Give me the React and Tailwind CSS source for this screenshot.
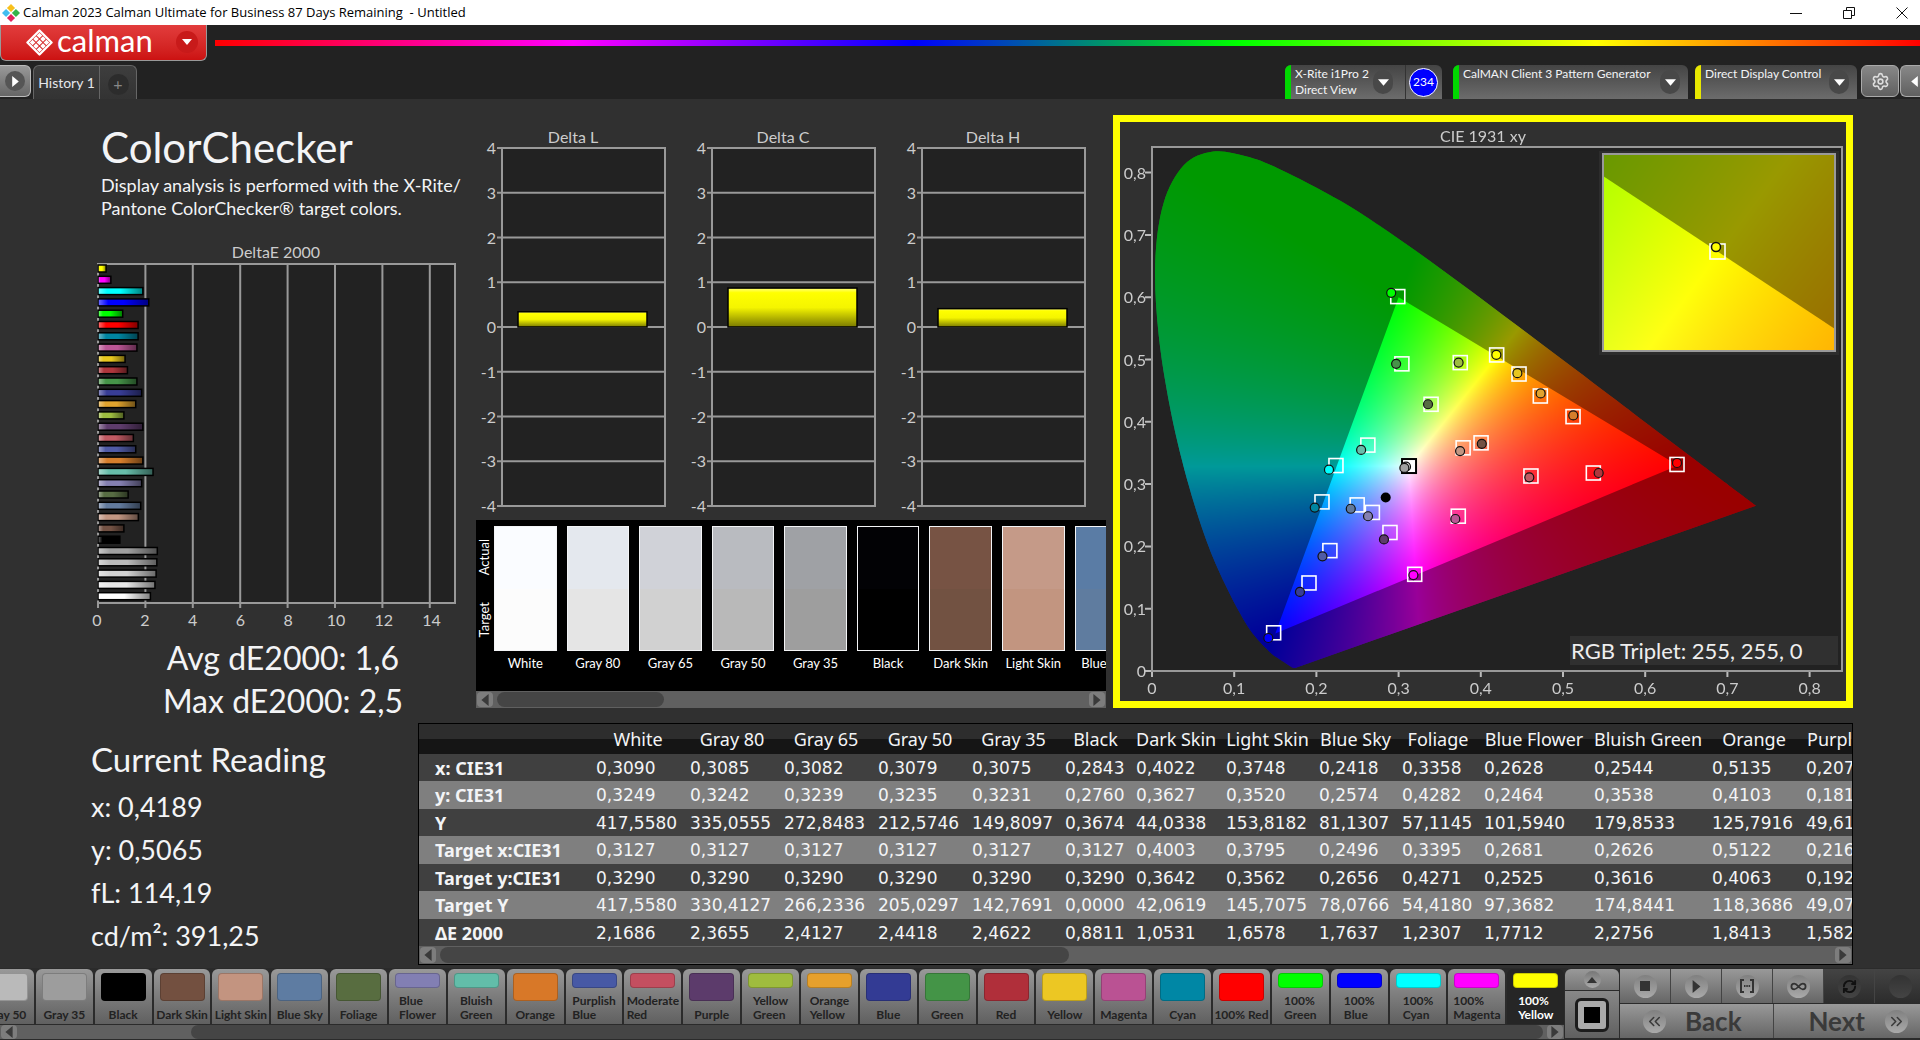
import React, { useLayoutEffect, useRef } from "react";
import { ChevronsLeft, ChevronsRight, Infinity as InfinityIcon, RefreshCw, Settings } from "lucide-react";
import clsx from "clsx";

const READINGS = [
  { name: "White", width: "w-[94px]", values: ["0,3090", "0,3249", "417,5580", "0,3127", "0,3290", "417,5580", "2,1686"] },
  { name: "Gray 80", width: "w-[94px]", values: ["0,3085", "0,3242", "335,0555", "0,3127", "0,3290", "330,4127", "2,3655"] },
  { name: "Gray 65", width: "w-[94px]", values: ["0,3082", "0,3239", "272,8483", "0,3127", "0,3290", "266,2336", "2,4127"] },
  { name: "Gray 50", width: "w-[94px]", values: ["0,3079", "0,3235", "212,5746", "0,3127", "0,3290", "205,0297", "2,4418"] },
  { name: "Gray 35", width: "w-[93px]", values: ["0,3075", "0,3231", "149,8097", "0,3127", "0,3290", "142,7691", "2,4622"] },
  { name: "Black", width: "w-[71px]", values: ["0,2843", "0,2760", "0,3674", "0,3127", "0,3290", "0,0000", "0,8811"] },
  { name: "Dark Skin", width: "w-[90px]", values: ["0,4022", "0,3627", "44,0338", "0,4003", "0,3642", "42,0619", "1,0531"] },
  { name: "Light Skin", width: "w-[93px]", values: ["0,3748", "0,3520", "153,8182", "0,3795", "0,3562", "145,7075", "1,6578"] },
  { name: "Blue Sky", width: "w-[83px]", values: ["0,2418", "0,2574", "81,1307", "0,2496", "0,2656", "78,0766", "1,7637"] },
  { name: "Foliage", width: "w-[82px]", values: ["0,3358", "0,4282", "57,1145", "0,3395", "0,4271", "54,4180", "1,2307"] },
  { name: "Blue Flower", width: "w-[110px]", values: ["0,2628", "0,2464", "101,5940", "0,2681", "0,2525", "97,3682", "1,7712"] },
  { name: "Bluish Green", width: "w-[118px]", values: ["0,2544", "0,3538", "179,8533", "0,2626", "0,3616", "174,8441", "2,2756"] },
  { name: "Orange", width: "w-[94px]", values: ["0,5135", "0,4103", "125,7916", "0,5122", "0,4063", "118,3686", "1,8413"] },
  { name: "Purplish Blue", width: "w-[124px]", values: ["0,2074", "0,1811", "49,6132", "0,2164", "0,1922", "49,0742", "1,5824"] },
];

const ROW_LABELS = ["x: CIE31", "y: CIE31", "Y", "Target x:CIE31", "Target y:CIE31", "Target Y", "ΔE 2000"];

const DELTA_E = [
  ["#ffff00", 0.3], ["#ff00ff", 0.5], ["#00ffff", 1.85], ["#0000ff", 2.1], ["#00ff00", 1.0],
  ["#ff0000", 1.65], ["#0085a1", 1.65], ["#bb5695", 1.6], ["#e7c71f", 1.1], ["#af363c", 1.2],
  ["#469449", 1.6], ["#383d96", 1.8], ["#e0a32e", 1.55], ["#9dbc40", 1.05], ["#5e3c6c", 1.85],
  ["#c15a63", 1.45], ["#505ba6", 1.55], ["#d67e2c", 1.85], ["#67bdaa", 2.28], ["#8580b1", 1.8],
  ["#576c43", 1.23], ["#627a9d", 1.76], ["#c29682", 1.66], ["#735244", 1.05], ["#000000", 0.88],
  ["#a0a0a0", 2.46], ["#bababa", 2.44], ["#d2d2d2", 2.41], ["#e6e6e6", 2.36], ["#ffffff", 2.17],
];

const SWATCHES = [
  { name: "White", actual: "bg-[#fafcff]", target: "bg-[#fcfcfc]" },
  { name: "Gray 80", actual: "bg-[#e4e8ee]", target: "bg-[#e5e5e5]" },
  { name: "Gray 65", actual: "bg-[#d0d2d8]", target: "bg-[#d1d1d1]" },
  { name: "Gray 50", actual: "bg-[#b9bbc0]", target: "bg-[#b9b9b9]" },
  { name: "Gray 35", actual: "bg-[#9fa1a5]", target: "bg-[#9e9e9e]" },
  { name: "Black", actual: "bg-[#020205]", target: "bg-black" },
  { name: "Dark Skin", actual: "bg-[#775344]", target: "bg-[#725242]" },
  { name: "Light Skin", actual: "bg-[#c59a88]", target: "bg-[#c29580]" },
  { name: "Blue Sky", actual: "bg-[#5a7ca5]", target: "bg-[#5f7c9f]" },
];

const PATCHES = [
  ["Gray 50", "bg-[#bababa]"],
  ["Gray 35", "bg-[#9d9d9d]"],
  ["Black", "bg-black"],
  ["Dark Skin", "bg-[#735040]"],
  ["Light Skin", "bg-[#c39480]"],
  ["Blue Sky", "bg-[#5e7ca2]"],
  ["Foliage", "bg-[#586d40]"],
  ["Blue Flower", "bg-[#827fb3]"],
  ["Bluish Green", "bg-[#62bda9]"],
  ["Orange", "bg-[#d87828]"],
  ["Purplish Blue", "bg-[#4759a5]"],
  ["Moderate Red", "bg-[#c44f60]"],
  ["Purple", "bg-[#5c3b6b]"],
  ["Yellow Green", "bg-[#9fbc3e]"],
  ["Orange Yellow", "bg-[#e6a02c]"],
  ["Blue", "bg-[#333b94]"],
  ["Green", "bg-[#449447]"],
  ["Red", "bg-[#b02f3a]"],
  ["Yellow", "bg-[#ecc723]"],
  ["Magenta", "bg-[#ba5293]"],
  ["Cyan", "bg-[#0087a5]"],
  ["100% Red", "bg-[#ff0000]"],
  ["100% Green", "bg-[#00ff00]"],
  ["100% Blue", "bg-[#0000ff]"],
  ["100% Cyan", "bg-[#00ffff]"],
  ["100% Magenta", "bg-[#ff00ff]"],
  ["100% Yellow", "bg-[#ffff00]"],
];

const ONE_LINE = ["Gray 35", "Gray 50", "Dark Skin", "Light Skin", "Blue Sky", "100% Red"];

// spectral locus, 380nm to 700nm
const LOCUS = [
  [0.1741, 0.005], [0.1714, 0.0051], [0.1644, 0.0109], [0.1566, 0.0177], [0.144, 0.0297],
  [0.1241, 0.0578], [0.1096, 0.0868], [0.0913, 0.1327], [0.0687, 0.2007], [0.0454, 0.295],
  [0.0235, 0.4127], [0.0082, 0.5384], [0.0039, 0.6548], [0.0139, 0.7502], [0.0389, 0.812],
  [0.0743, 0.8338], [0.1142, 0.8262], [0.1547, 0.8059], [0.2296, 0.7543], [0.3016, 0.6923],
  [0.3731, 0.6245], [0.4441, 0.5547], [0.5125, 0.4866], [0.5752, 0.4242], [0.627, 0.3725],
  [0.6658, 0.334], [0.6915, 0.3083], [0.719, 0.2809], [0.7347, 0.2653],
];

// target x, target y, measured x, measured y, color
const POINTS = [
  [0.299, 0.601, 0.291, 0.607, "#00ff00"],
  [0.304, 0.493, 0.297, 0.493, "#469449"],
  [0.375, 0.495, 0.373, 0.495, "#9dbc40"],
  [0.4193, 0.5073, 0.4189, 0.5075, "#ffff00"],
  [0.4465, 0.4767, 0.4445, 0.478, "#e7c71f"],
  [0.4724, 0.4414, 0.4728, 0.4456, "#e0a32e"],
  [0.5122, 0.4083, 0.5125, 0.4103, "#d67e2c"],
  [0.3395, 0.4281, 0.3358, 0.4282, "#576c43"],
  [0.2626, 0.3626, 0.2544, 0.3548, "#67bdaa"],
  [0.2238, 0.3298, 0.2153, 0.3231, "#00ffff"],
  [0.2068, 0.2714, 0.198, 0.2623, "#0085a1"],
  [0.2496, 0.2666, 0.2418, 0.2604, "#627a9d"],
  [0.2681, 0.2545, 0.2628, 0.2484, "#8580b1"],
  [0.2895, 0.2223, 0.2822, 0.2112, "#5e3c6c"],
  [0.2164, 0.1932, 0.2074, 0.1841, "#505ba6"],
  [0.191, 0.1413, 0.18, 0.127, "#383d96"],
  [0.148, 0.0613, 0.1415, 0.053, "#0000ff"],
  [0.3196, 0.1552, 0.318, 0.154, "#ff00ff"],
  [0.3726, 0.2485, 0.369, 0.244, "#bb5695"],
  [0.3785, 0.3582, 0.3748, 0.353, "#c29682"],
  [0.4003, 0.3662, 0.4012, 0.3647, "#735244"],
  [0.461, 0.313, 0.459, 0.3108, "#c15a63"],
  [0.5369, 0.3178, 0.5434, 0.3178, "#af363c"],
  [0.6387, 0.3315, 0.6387, 0.3339, "#ff0000"],
];

const METER_READINGS = ["x: 0,4189", "y: 0,5065", "fL: 114,19", "cd/m²: 391,25"];

function xyToRgb(x, y) {
  const X = x / y;
  const Z = (1 - x - y) / y;
  const r = Math.max(0, 3.2406 * X - 1.5372 - 0.4986 * Z);
  const g = Math.max(0, -0.9689 * X + 1.8758 + 0.0415 * Z);
  const b = Math.max(0, 0.0557 * X - 0.204 + 1.057 * Z);
  const max = Math.max(r, g, b) || 1;
  return [r, g, b].map((v) => (255 * v) / max);
}

// Fills a canvas with the fully lit chromaticity colors of the given xy window
const ChromaField = ({ width, height, x0, x1, y0, y1 }) => {
  const ref = useRef(null);

  useLayoutEffect(() => {
    const ctx = ref.current.getContext("2d");
    const image = ctx.createImageData(width, height);
    for (let j = 0; j < height; j++) {
      const y = y1 - ((j + 0.5) / height) * (y1 - y0);
      for (let i = 0; i < width; i++) {
        const x = x0 + ((i + 0.5) / width) * (x1 - x0);
        const [r, g, b] = xyToRgb(x, y);
        image.data.set([r, g, b, 255], (j * width + i) * 4);
      }
    }
    ctx.putImageData(image, 0, 0);
  }, [width, height, x0, x1, y0, y1]);

  return <canvas ref={ref} width={width} height={height} className="block" />;
};

const px = (x) => 32 + x * 822;
const py = (y) => 549 - y * 623;

function smoothPath(points) {
  const p = points.map(([x, y]) => [px(x), py(y)]);
  let d = `M${p[0]}`;
  for (let i = 0; i < p.length - 1; i++) {
    const a = p[i - 1] || p[i];
    const b = p[i];
    const c = p[i + 1];
    const e = p[i + 2] || c;
    d += `C${b[0] + (c[0] - a[0]) / 6},${b[1] + (c[1] - a[1]) / 6} ${c[0] - (e[0] - b[0]) / 6},${c[1] - (e[1] - b[1]) / 6} ${c}`;
  }
  return d + "Z";
}

const LOCUS_PATH = smoothPath(LOCUS);
const TRIANGLE = `M${px(0.64)},${py(0.33)}L${px(0.3)},${py(0.6)}L${px(0.15)},${py(0.06)}Z`;

const CieChart = () => (
  <svg viewBox="0 0 726 579" className="block w-full h-auto bg-[#303030] font-['Lato',sans-serif]">
    <rect x="32" y="25" width="690" height="524" fill="#222" />
    <foreignObject x="32" y="25" width="640" height="524">
      <ChromaField width={640} height={524} x0={0} x1={640 / 822} y0={0} y1={524 / 623} />
    </foreignObject>
    <path d={`M31,24H673V550H31Z${LOCUS_PATH}`} fill="#222" fillRule="evenodd" />
    <path d={LOCUS_PATH + TRIANGLE} fill="#000" fillOpacity="0.4" fillRule="evenodd" />
    <rect x="32" y="25" width="690" height="524" fill="none" stroke="#999" strokeWidth="2" />
    <g fill="#ccc" fontSize="16">
      <text x="363" y="20" textAnchor="middle">CIE 1931 xy</text>
      {[0, 1, 2, 3, 4, 5, 6, 7, 8].map((n) => (
        <g key={n}>
          <path d={`M${px(n / 10)},550v5M31,${py(n / 10)}h-6`} stroke="#bbb" strokeWidth="2" />
          <text x={px(n / 10)} y="572" textAnchor="middle">{n ? `0,${n}` : "0"}</text>
          <text x="26" y={py(n / 10) + 6} textAnchor="end">{n ? `0,${n}` : "0"}</text>
        </g>
      ))}
    </g>
    {POINTS.map(([tx, ty, mx, my, color]) => (
      <g key={color + tx}>
        <rect x={px(tx) - 7} y={py(ty) - 7} width="14" height="14" fill="none" stroke="#fff" strokeWidth="1.6" />
        <circle cx={px(mx)} cy={py(my)} r="4.5" fill={color} stroke="#111" strokeWidth="1.2" />
      </g>
    ))}
    <rect x={px(0.3127) - 7} y={py(0.329) - 7} width="14" height="14" fill="#fff" stroke="#000" strokeWidth="2" />
    <circle cx={px(0.309)} cy={py(0.328)} r="4.5" fill="#ddd" stroke="#111" strokeWidth="1.2" />
    <circle cx={px(0.307)} cy={py(0.326)} r="4.5" fill="#a0a0a0" stroke="#111" strokeWidth="1.2" />
    <circle cx={px(0.2843)} cy={py(0.2786)} r="5" fill="#000" />

    {/* magnified area around the current reading */}
    <rect x="479" y="29" width="240" height="204" fill="#2c2c2c" />
    <foreignObject x="483" y="32" width="232" height="197">
      <ChromaField width={232} height={197} x0={0.394} x1={0.4444} y0={0.4792} y1={0.531} />
    </foreignObject>
    <path d="M483,54L715,207V32H483Z" fill="#000" fillOpacity="0.4" />
    <rect x="483" y="32" width="232" height="197" fill="none" stroke="#999" strokeWidth="2" />
    <rect x="590" y="122" width="15" height="15" fill="none" stroke="#fff" strokeWidth="1.6" />
    <circle cx="596" cy="125" r="4.5" fill="#ffff00" stroke="#111" strokeWidth="1.5" />

    <rect x="450" y="514" width="268" height="29" fill="#303030" />
    <text x="451" y="537" fill="#eee" fontSize="22">RGB Triplet: 255, 255, 0</text>
  </svg>
);

const DeltaEChart = () => (
  <svg viewBox="0 0 386 394" className="block w-[386px] h-auto font-['Lato',sans-serif]">
    <defs>
      <linearGradient id="shade" x1="0" x2="1" y1="0" y2="0">
        <stop offset="0" stopColor="#fff" stopOpacity="0.45" />
        <stop offset="0.2" stopColor="#fff" stopOpacity="0" />
        <stop offset="0.5" stopColor="#000" stopOpacity="0" />
        <stop offset="1" stopColor="#000" stopOpacity="0.5" />
      </linearGradient>
    </defs>
    <text x="193" y="18" textAnchor="middle" fill="#ccc" fontSize="16">DeltaE 2000</text>
    <rect x="15" y="24" width="357" height="339" fill="#222" stroke="#999" strokeWidth="2" />
    {[0, 2, 4, 6, 8, 10, 12, 14].map((n) => (
      <g key={n}>
        <path d={`M${15 + n * 23.7},24v344`} stroke="#999" strokeWidth="2" />
        <text x={14 + n * 23.9} y="386" textAnchor="middle" fill="#ccc" fontSize="16">{n}</text>
      </g>
    ))}
    {DELTA_E.map(([color, value], i) => (
      <g key={i}>
        <rect x="15" y={25 + i * 11.3} width={value * 23.7 + 1} height="7" fill={color} />
        <rect x="15" y={25 + i * 11.3} width={value * 23.7 + 1} height="7" fill="url(#shade)" stroke="#000" strokeWidth="1.5" />
      </g>
    ))}
  </svg>
);

const DeltaChart = ({ title, value }) => (
  <svg viewBox="0 -8 210 396" className="block flex-1 min-w-0 h-auto font-['Lato',sans-serif]">
    <defs>
      <linearGradient id="yellow" x1="0" x2="0" y1="0" y2="1">
        <stop offset="0" stopColor="#ffff80" />
        <stop offset="0.12" stopColor="#ffff00" />
        <stop offset="0.5" stopColor="#f5f500" />
        <stop offset="1" stopColor="#7a7a00" />
      </linearGradient>
    </defs>
    <text x="103" y="15" textAnchor="middle" fill="#ccc" fontSize="16">{title}</text>
    <rect x="32" y="20" width="163" height="358" fill="#222" stroke="#999" strokeWidth="2" />
    {[4, 3, 2, 1, 0, -1, -2, -3, -4].map((n) => (
      <g key={n}>
        <path d={`M27,${199 - n * 44.75}H195`} stroke="#999" strokeWidth="1.8" />
        <text x="26" y={205 - n * 44.75} textAnchor="end" fill="#ccc" fontSize="16">{n}</text>
      </g>
    ))}
    <rect x="48" y={199 - value * 44.75} width="129" height={value * 44.75} fill="url(#yellow)" stroke="#000" strokeWidth="1.5" />
  </svg>
);

const Arrow = ({ dir = "down", className }) => (
  <svg viewBox="0 0 10 10" className={clsx("block shrink-0", className)} fill="currentColor" aria-hidden="true">
    {dir === "down" && <path d="M0,2h10L5,8z" />}
    {dir === "up" && <path d="M0,8h10L5,2z" />}
    {dir === "left" && <path d="M8,0v10L2,5z" />}
    {dir === "right" && <path d="M2,0v10L8,5z" />}
  </svg>
);

const ScrollBar = ({ children, className }) => (
  <div className={clsx("flex items-center gap-1 px-px bg-[#606060]", className)}>
    <button aria-label="Scroll left" className="w-4 h-full flex items-center justify-center rounded bg-[#7d7d7d] text-[#3a3a3a]">
      <Arrow dir="left" className="w-3 h-3" />
    </button>
    <div className="flex-1 h-full flex">{children}</div>
    <button aria-label="Scroll right" className="w-4 h-full flex items-center justify-center rounded bg-[#7d7d7d] text-[#3a3a3a]">
      <Arrow dir="right" className="w-3 h-3" />
    </button>
  </div>
);

const TitleBar = () => (
  <div className="h-[25px] bg-white text-black flex items-center pl-0.5">
    <svg viewBox="0 0 20 20" className="w-[18px] h-[18px] mr-[3px]" aria-hidden="true">
      <path d="M10,0l4.5,4.5L10,9L5.500,4.5z" fill="#f8c01c" />
      <path d="M15.500,5.500l4.500,4.500l-4.500,4.500l-4.500,-4.500z" fill="#35b44a" />
      <path d="M4.500,5.500l4.500,4.500l-4.500,4.500l-4.500,-4.500z" fill="#42bdf0" />
      <path d="M10,11l4.500,4.500L10,20l-4.500,-4.500z" fill="#e3235c" />
    </svg>
    <span className="flex-1 pt-px text-[13px] font-['Open_Sans',sans-serif] whitespace-pre">
      Calman 2023 Calman Ultimate for Business 87 Days Remaining  - Untitled
    </span>
    <div className="h-full flex gap-[17px]">
      <button aria-label="Minimize" className="w-9 flex items-center justify-center">
        <svg viewBox="0 0 12 12" className="w-3 h-3" stroke="#111" fill="none"><path d="M0,6.5h12" /></svg>
      </button>
      <button aria-label="Restore" className="w-9 flex items-center justify-center">
        <svg viewBox="0 0 12 12" className="w-3 h-3" stroke="#111" fill="none"><path d="M.5,3.500h8v8h-8zM3.500,3.500v-3h8v8h-3" /></svg>
      </button>
      <button aria-label="Close" className="w-9 flex items-center justify-center">
        <svg viewBox="0 0 12 12" className="w-3 h-3" stroke="#111" fill="none"><path d="M.5,.5l11,11M11.500,.5l-11,11" /></svg>
      </button>
    </div>
  </div>
);

const Logo = () => (
  <svg viewBox="0 0 28 28" className="w-[27px] h-[27px]" aria-hidden="true">
    <path d="M14,1.500L26.500,14L14,26.500L1.500,14z" fill="none" stroke="#fff" strokeWidth="2.400" strokeLinejoin="round" />
    <g fill="#fff">
      {[-1, 0, 1].map((a) =>
        [-1, 0, 1].map((b) => (
          <path key={`${a}${b}`} transform={`translate(${14 + (a - b) * 3.6} ${14 + (a + b) * 3.6})`} d="M0,-2.900L2.900,0L0,2.900L-2.900,0z" />
        ))
      )}
    </g>
  </svg>
);

const DeviceButton = ({ lines, stripe, className, badge }) => (
  <div className={clsx("flex h-[34px] rounded-t-md overflow-hidden bg-gradient-to-b from-[#444] to-[#6c6c6c]", className)}>
    <div className={clsx("w-[6px] shrink-0", stripe)} />
    <button className={clsx("flex-1 flex items-center justify-between pl-1 text-left", badge ? "pr-3" : "pr-2")}>
      <span className="self-start pt-px text-[12px] leading-4 text-gray-100">
        {lines.map((line) => (
          <span key={line} className="block whitespace-nowrap">{line}</span>
        ))}
      </span>
      <span className="w-5 h-6 rounded-full bg-[#484848] flex items-center justify-center shrink-0">
        <Arrow className="w-[11px] h-[11px] text-white" />
      </span>
    </button>
    {badge && (
      <div className="w-9 mr-px border-l border-[#333] flex items-center justify-center">
        <span className="w-[29px] h-[29px] rounded-full border border-white bg-[#0000ff] text-white text-[12px] flex items-center justify-center">
          {badge}
        </span>
      </div>
    )}
  </div>
);

const Header = () => (
  <header className="bg-[#222]">
    <div className="h-9 flex items-center">
      <button className="w-[207px] h-9 -mt-px pl-[25px] pr-2 flex items-center justify-between rounded-b-md border border-t-0 border-[#999] bg-gradient-to-b from-[#e23c3c] to-[#cc1111]">
        <span className="flex items-center gap-1">
          <Logo />
          <span className="text-[31px] leading-8 pb-1 text-white">calman</span>
        </span>
        <span className="w-[22px] h-[22px] rounded-full bg-[#c81a1a] flex items-center justify-center">
          <Arrow className="w-[10px] h-[10px] text-white" />
        </span>
      </button>
      <div className="flex-1 ml-2 h-[6px] bg-[linear-gradient(90deg,#ff0000,#ff00ff_21%,#0000ff_41%,#00ff00_60%,#ffff00_81%,#ff0000)]" />
    </div>
    <div className="pt-1 flex items-start text-gray-200">
      <button aria-label="Expand" className="w-[31px] h-8 rounded-r-md border border-l-0 border-[#bbb] bg-gradient-to-b from-[#999] to-[#666] flex items-center justify-center">
        <span className="w-5 h-5 rounded-full bg-[#555] flex items-center justify-center">
          <Arrow dir="right" className="w-[11px] h-[11px] text-white" />
        </span>
      </button>
      <div className="ml-0.5 h-[34px] flex rounded-t-md border border-b-0 border-[#666] bg-gradient-to-b from-[#3e3e3e] to-[#333]">
        <button className="w-[65px] text-[14px] whitespace-nowrap">History 1</button>
        <button aria-label="Add history" className="w-[37px] border-l border-[#666] flex items-center justify-center">
          <span className="w-[21px] h-[21px] mt-1 rounded-full bg-[#2c2c2c] text-[#888] text-[16px] leading-5">+</span>
        </button>
      </div>
      <div className="flex-1" />
      <DeviceButton lines={["X-Rite i1Pro 2", "Direct View"]} stripe="bg-[#00d800]" className="w-[157px] mr-1" badge="234" />
      <DeviceButton lines={["CalMAN Client 3 Pattern Generator"]} stripe="bg-[#00d800]" className="w-[235px] ml-[7px]" />
      <DeviceButton lines={["Direct Display Control"]} stripe="bg-[#e8e800]" className="w-[162px] ml-[7px]" />
      <button aria-label="Settings" className="ml-1 w-[38px] h-8 rounded-md border border-[#aaa] bg-gradient-to-b from-[#888] to-[#606060] flex items-center justify-center">
        <Settings size={19} className="text-[#ddd]" />
      </button>
      <button aria-label="Collapse" className="ml-px w-5 h-8 rounded-l-md border border-r-0 border-[#aaa] bg-gradient-to-b from-[#888] to-[#606060] flex items-center justify-end">
        <Arrow dir="left" className="w-[11px] h-[11px] text-white" />
      </button>
    </div>
  </header>
);

const SwatchPanel = () => (
  <div className="ml-[6px] mt-1">
    <div className="h-[171px] bg-black flex pt-[6px] overflow-hidden text-white text-[13px]">
      <div className="w-[18px] h-[125px] shrink-0 flex flex-col justify-around items-center">
        <span className="[writing-mode:vertical-rl] rotate-180">Actual</span>
        <span className="[writing-mode:vertical-rl] rotate-180">Target</span>
      </div>
      <div className="w-[643px] shrink-0 flex gap-[10px]">
        {SWATCHES.map((s) => (
          <div key={s.name} className="flex-1 min-w-0 text-center">
            <div className="h-[125px] border border-gray-100 flex flex-col">
              <div className={clsx("flex-1", s.actual)} />
              <div className={clsx("flex-1", s.target)} />
            </div>
            <div className="mt-1 leading-4 whitespace-nowrap">{s.name}</div>
          </div>
        ))}
      </div>
    </div>
    <ScrollBar className="h-[17px] py-px">
      <div className="w-[167px] rounded-full bg-[#454545]" />
    </ScrollBar>
  </div>
);

const ReadingsTable = () => (
  <div className="flex-1 min-w-0 border border-black">
    <div className="overflow-hidden">
      <table className="w-[1600px] table-fixed border-collapse text-left text-gray-100 whitespace-nowrap">
        <colgroup>
          <col className="w-[177px]" />
          {READINGS.map((r) => (
            <col key={r.name} className={r.width} />
          ))}
          <col />
        </colgroup>
        <thead>
          <tr className="h-[30px] bg-[linear-gradient(#2d2d2d_50%,#151515_50%)] text-[18px] leading-5 font-['Noto_Sans',sans-serif]">
            <td />
            {READINGS.map((r) => (
              <th key={r.name} scope="col" className="p-0 pr-[10px] text-center font-normal">{r.name}</th>
            ))}
            <td />
          </tr>
        </thead>
        <tbody>
          {ROW_LABELS.map((label, i) => (
            <tr key={label} className="h-[27px] even:h-[28px] bg-[#404040] even:bg-[#7f7f7f]">
              <th scope="row" className="p-0 pl-4 text-[18px] leading-5 font-bold font-['Noto_Sans',sans-serif]">{label}</th>
              {READINGS.map((r) => (
                <td key={r.name} className="p-0 text-[17px] leading-5 font-['DejaVu_Sans',sans-serif]">{r.values[i]}</td>
              ))}
              <td />
            </tr>
          ))}
        </tbody>
      </table>
    </div>
    <ScrollBar className="h-[18px] py-px">
      <div className="w-[629px] rounded-full bg-[#454545]" />
    </ScrollBar>
  </div>
);

const PatchButton = ({ name, color, active }) => {
  const twoLines = name.includes(" ") && !ONE_LINE.includes(name);
  return (
    <button
      className={clsx(
        "flex-1 min-w-0 h-[55px] rounded-t-md pt-1 flex flex-col items-center justify-between text-[12px] leading-[14px] font-bold",
        active ? "bg-[#262626] text-white" : "bg-gradient-to-b from-[#999] to-[#606060] text-[#222]"
      )}
    >
      <span className={clsx("w-[45px] rounded border border-black/20", twoLines ? "h-[15px]" : "h-7", color)} />
      <span className={clsx("pb-0.5 text-left", !twoLines && "whitespace-nowrap")}>
        {twoLines ? name.split(" ").map((w) => <span key={w} className="block">{w}</span>) : name}
      </span>
    </button>
  );
};

const ControlButton = ({ label, disabled, children }) => (
  <button
    aria-label={label}
    disabled={disabled}
    className={clsx(
      "w-[51px] shrink-0 h-[34px] flex items-center justify-center border-r border-[#444] text-[#333]",
      disabled ? "bg-gradient-to-b from-[#444] to-[#2c2c2c]" : "bg-gradient-to-b from-[#999] to-[#666]"
    )}
  >
    <span
      className={clsx(
        "w-[23px] h-[23px] rounded-full flex items-center justify-center bg-gradient-to-b",
        disabled ? "from-[#333] to-[#444] text-[#111]" : "from-[#808080] to-[#aaa]"
      )}
    >
      {children}
    </span>
  </button>
);

const Footer = () => (
  <footer className="h-[72px] pt-px bg-[#2b2b2b] flex gap-px">
    <div className="flex-1 min-w-0 overflow-hidden">
      <div className="-ml-[23px] flex gap-[2px]">
        {PATCHES.map(([name, color]) => (
          <PatchButton key={name} name={name} color={color} active={name === "100% Yellow"} />
        ))}
      </div>
      <ScrollBar className="mt-[1px] h-[14px]">
        <div className="flex-1 ml-[170px] rounded-full bg-[#454545]" />
      </ScrollBar>
    </div>
    <div className="w-[54px] flex flex-col">
      <button aria-label="More" className="h-[21px] rounded-t-md bg-gradient-to-b from-[#999] to-[#777] flex items-center justify-center text-[#333]">
        <span className="w-[17px] h-[17px] rounded-full bg-gradient-to-b from-[#777] to-[#aaa] flex items-center justify-center">
          <Arrow dir="up" className="w-[10px] h-[10px]" />
        </span>
      </button>
      <button aria-label="Read window" className="mt-px h-[47px] bg-gradient-to-b from-[#888] to-[#606060] flex items-center justify-center">
        <span className="w-[34px] h-[34px] rounded-md border-[3px] border-[#1c1c1c] bg-[#aaa] flex items-center justify-center">
          <span className="w-4 h-4 bg-black" />
        </span>
      </button>
    </div>
    <div className="w-[300px] overflow-hidden">
      <div className="flex">
        <ControlButton label="Stop"><span className="w-[10px] h-[10px] bg-[#333]" /></ControlButton>
        <ControlButton label="Play"><Arrow dir="right" className="w-[13px] h-[13px]" /></ControlButton>
        <ControlButton label="Read series">
          <svg viewBox="0 0 16 14" className="w-4 h-[14px]" fill="none" stroke="currentColor" strokeWidth="2">
            <path d="M5,1H2v12h3M11,1h3v12h-3M5,7h1.500M7.300,7h1.500M9.600,7h1.500" />
          </svg>
        </ControlButton>
        <ControlButton label="Read continuously"><InfinityIcon size={17} strokeWidth={2.5} /></ControlButton>
        <ControlButton label="Refresh" disabled><RefreshCw size={15} strokeWidth={3} /></ControlButton>
        <ControlButton label="Record" disabled />
      </div>
      <div className="mt-px flex text-[26px] font-bold text-[#3a3a3a]">
        <button className="w-[154px] h-[34px] border-r border-[#444] bg-gradient-to-b from-[#999] to-[#666] flex items-center gap-[19px] pl-[23px] leading-8">
          <span className="w-[23px] h-[23px] rounded-full bg-gradient-to-b from-[#808080] to-[#aaa] flex items-center justify-center">
            <ChevronsLeft size={19} />
          </span>
          Back
        </button>
        <button className="flex-1 h-[34px] bg-gradient-to-b from-[#999] to-[#666] flex items-center justify-end gap-5 pr-3 leading-8">
          Next
          <span className="w-[23px] h-[23px] rounded-full bg-gradient-to-b from-[#808080] to-[#aaa] flex items-center justify-center">
            <ChevronsRight size={19} />
          </span>
        </button>
      </div>
    </div>
  </footer>
);

const App = () => {
  return (
    <div className="min-h-screen flex flex-col bg-[#303030] font-['Lato',sans-serif] overflow-hidden">
      <TitleBar />
      <Header />
      <main className="flex-1">
        <div className="flex pr-[67px] pt-4">
          <section className="w-[470px] shrink-0 text-gray-100">
            <h1 className="pl-[101px] pt-[6px] text-[42px] leading-[52px]">ColorChecker</h1>
            <p className="pl-[101px] pt-px text-[18px] leading-[23px] whitespace-nowrap">
              Display analysis is performed with the X-Rite/
              <br />
              Pantone ColorChecker® target colors.
            </p>
            <div className="mt-5 pl-[83px]">
              <DeltaEChart />
            </div>
            <div className="mt-0.5 pl-[96px] text-center text-[32px] leading-[43px]">
              <p>Avg dE2000: 1,6</p>
              <p>Max dE2000: 2,5</p>
            </div>
          </section>
          <section className="w-[636px] shrink-0 pt-[5px]">
            <div className="flex pr-[6px]">
              <DeltaChart title="Delta L" value={0.34} />
              <DeltaChart title="Delta C" value={0.87} />
              <DeltaChart title="Delta H" value={0.41} />
            </div>
            <SwatchPanel />
          </section>
          <section className="flex-1 min-w-0 ml-[7px] self-start border-[7px] border-[#ffff00]">
            <CieChart />
          </section>
        </div>
        <div className="mt-px flex items-start pr-[67px]">
          <section className="w-[418px] shrink-0 pl-[91px] pt-[14px] text-gray-100">
            <h2 className="text-[33px] leading-[44px]">Current Reading</h2>
            <div className="mt-1 text-[27px] leading-[43px]">
              {METER_READINGS.map((line) => (
                <p key={line}>{line}</p>
              ))}
            </div>
          </section>
          <ReadingsTable />
        </div>
      </main>
      <Footer />
    </div>
  );
};

export default App;
